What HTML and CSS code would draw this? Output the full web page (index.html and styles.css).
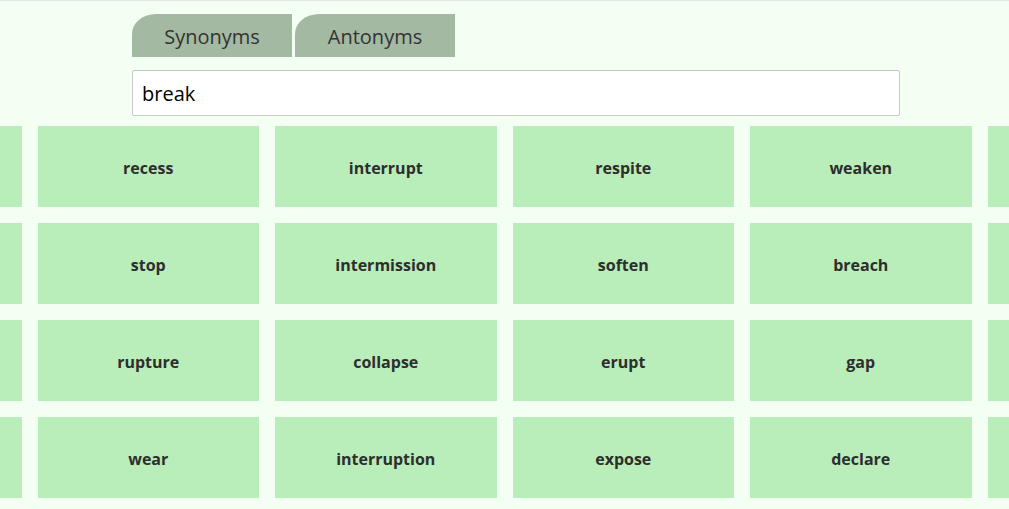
FILE: index.html
```html
<!DOCTYPE html>
<html lang="en">
<head>
<meta charset="utf-8">
<title>Thesaurus</title>
<link rel="stylesheet" href="styles.css">
</head>
<body>
<div class="page">
  <header class="top">
    <nav class="tabs">
      <button class="tab">Synonyms</button>
      <button class="tab">Antonyms</button>
    </nav>
    <input class="search" type="text" value="break">
  </header>
  <main class="results">
    <div class="grid">
      <div class="card"></div><div class="card">recess</div><div class="card">interrupt</div><div class="card">respite</div><div class="card">weaken</div><div class="card"></div>
      <div class="card"></div><div class="card">stop</div><div class="card">intermission</div><div class="card">soften</div><div class="card">breach</div><div class="card"></div>
      <div class="card"></div><div class="card">rupture</div><div class="card">collapse</div><div class="card">erupt</div><div class="card">gap</div><div class="card"></div>
      <div class="card"></div><div class="card">wear</div><div class="card">interruption</div><div class="card">expose</div><div class="card">declare</div><div class="card"></div>
    </div>
  </main>
</div>
</body>
</html>
```
FILE: styles.css
```css
* { box-sizing: border-box; }
html, body {
  margin: 0;
  padding: 0;
  background: #f4fff4;
  overflow: hidden;
}
body {
  font-family: "Open Sans", "Noto Sans", sans-serif;
  color: #333;
  border-top: 1px solid #dfe8df;
  height: 509px;
}
.top {
  margin-left: 132px;
  width: 768px;
  padding-top: 13px;
}
.tabs {
  display: flex;
  gap: 3px;
}
.tab {
  width: 160px;
  height: 43px;
  border: none;
  background: #a3b9a2;
  border-radius: 24px 0 0 0 / 20px 0 0 0;
  font-family: inherit;
  font-size: 20px;
  color: #333;
  padding: 2px 0 0;
}
.search {
  display: block;
  margin-top: 13px;
  width: 768px;
  height: 46px;
  border: 1px solid #c8c8c8;
  border-radius: 2px;
  background: #fff;
  font-family: inherit;
  font-size: 20px;
  color: #000;
  padding: 0 9px;
  outline: none;
}
.results {
  display: flex;
  justify-content: center;
  margin-top: 10px;
}
.grid {
  flex-shrink: 0;
  display: grid;
  grid-template-columns: repeat(6, 221.5px);
  grid-auto-rows: 81px;
  column-gap: 16px;
  row-gap: 16px;
}
.card {
  background: #b9edb9;
  display: flex;
  align-items: center;
  justify-content: center;
  font-weight: 700;
  font-size: 16px;
  color: #2e2e2e;
  padding-top: 2px;
}
```
